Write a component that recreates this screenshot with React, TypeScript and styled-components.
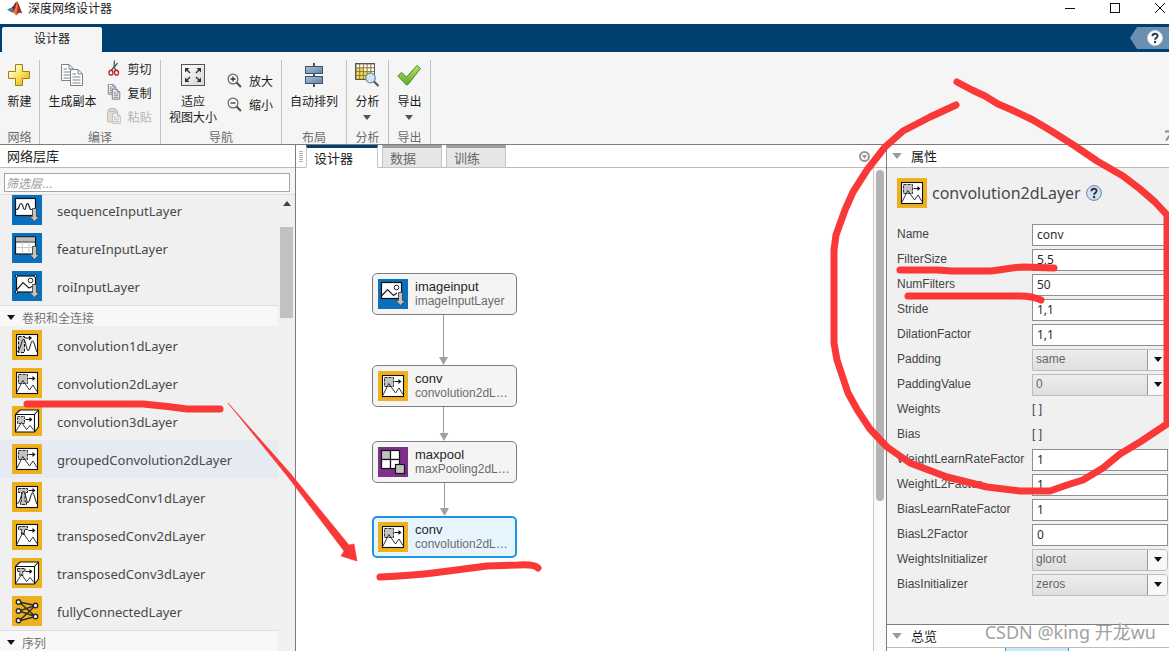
import React from "react";
import styled, { createGlobalStyle, css } from "styled-components";

const UI = `"Noto Sans", "Noto Sans CJK SC", sans-serif`;
const CJK = `"Noto Sans CJK SC", "Noto Sans", sans-serif`;
const ARIAL = `"Liberation Sans", "Noto Sans CJK SC", sans-serif`;

const GlobalStyle = createGlobalStyle`
  * { box-sizing: border-box; }
  body { margin: 0; background: #fff; font-family: ${CJK}; font-size: 12px; color: #1c1c1c; }
  button, input, select { font: inherit; color: inherit; margin: 0; }
  h1, h2, h3, p, ul { margin: 0; padding: 0; font-weight: 400; font-size: inherit; }
  ul { list-style: none; }
  svg { display: block; flex: none; }
`;

/* ---------- window frame ---------- */

const Window = styled.div`
  position: relative;
  display: flex;
  flex-direction: column;
  height: 100vh;
  overflow: hidden;
`;

const TitleBar = styled.header`
  display: flex;
  align-items: center;
  gap: 5px;
  height: 24px;
  padding: 0 0 8px 7px;
  flex: none;
`;

const WindowTitle = styled.h1`
  flex: 1;
  font-size: 12px;
  line-height: 16px;
`;

const WindowButton = styled.button`
  width: 18px;
  height: 16px;
  margin-left: 22px;
  padding: 0;
  border: 0;
  background: none;
  display: grid;
  place-items: center;
`;

const TabStrip = styled.nav`
  display: flex;
  justify-content: space-between;
  align-items: flex-end;
  height: 28px;
  padding-left: 2px;
  background: #004070;
  flex: none;
`;

const RibbonTab = styled.button`
  display: grid;
  justify-content: center;
  align-content: start;
  width: 100px;
  height: 25px;
  padding: 0;
  border: 0;
  border-radius: 2px 2px 0 0;
  background: #f5f5f5;
  font-size: 12px;
  line-height: 22px;
`;

const HelpTab = styled.button`
  width: 39px;
  height: 22px;
  margin-bottom: 3px;
  padding: 0 0 0 10px;
  border: 0;
  background: #6a8fb0;
  clip-path: polygon(0 50%, 7px 0, 100% 0, 100% 100%, 7px 100%);
  display: grid;
  place-items: center;
`;

/* ---------- ribbon ---------- */

const Ribbon = styled.section`
  display: flex;
  height: 93px;
  padding-top: 8px;
  background: #f5f5f5;
  border-bottom: 1px solid #7c7c7c;
  flex: none;
`;

const RibbonGroup = styled.div<{ $width: number }>`
  display: flex;
  flex-direction: column;
  justify-content: space-between;
  width: ${(p) => p.$width}px;
  border-right: 1px solid #c2c2c2;
`;

const GroupBody = styled.div`
  display: flex;
  justify-content: center;
  gap: 10px;
`;

const GroupLabel = styled.div`
  height: 14px;
  line-height: 14px;
  text-align: center;
  color: #6b6b6b;
`;

const BigButton = styled.button`
  display: flex;
  flex-direction: column;
  align-items: center;
  padding: 3px 0 0;
  border: 0;
  background: none;
  line-height: 16px;
  white-space: nowrap;
`;

const BigLabel = styled.span`
  margin-top: 6px;
`;

const SmallStack = styled.div<{ $top: number }>`
  display: flex;
  flex-direction: column;
  margin-top: ${(p) => p.$top}px;
`;

const SmallButton = styled.button`
  display: flex;
  align-items: center;
  gap: 7px;
  height: 24px;
  padding: 0;
  border: 0;
  background: none;
  white-space: nowrap;
  &:disabled { color: #b4b4b4; }
`;

const Collapse = styled.button`
  display: grid;
  align-self: flex-end;
  width: 4px;
  height: 14px;
  margin-left: auto;
  padding: 0;
  border: 0;
  background: none;
  overflow: hidden;
`;

/* ---------- work area ---------- */

const WorkArea = styled.main`
  display: flex;
  flex: 1;
  min-height: 0;
`;

const PanelHeader = styled.h2<{ $pad: number }>`
  display: flex;
  align-items: center;
  gap: 9px;
  height: 23px;
  padding-left: ${(p) => p.$pad}px;
  border-bottom: 1px solid #bdbdbd;
  background: #fff;
  font-size: 13px;
  line-height: 22px;
  flex: none;
`;

const Library = styled.aside`
  display: flex;
  flex-direction: column;
  width: 296px;
  border-right: 1px solid #7c7c7c;
  background: #f0f0f0;
  flex: none;
`;

const FilterBar = styled.div`
  height: 27px;
  padding: 5px 5px 3px 4px;
  border-bottom: 1px solid #e0e0e0;
  background: #f5f5f5;
  flex: none;
`;

const FilterInput = styled.input`
  display: block;
  width: 100%;
  height: 19px;
  padding: 0 1px;
  border: 1px solid #a5a5a5;
  background: #fff;
  font-size: 12px;
  &::placeholder { color: #9b9b9b; font-style: italic; opacity: 1; }
`;

const LibraryScroll = styled.div`
  display: flex;
  flex: 1;
  min-height: 0;
  overflow: hidden;
`;

const LibraryList = styled.div`
  flex: 1;
  margin-top: -4px;
`;

const LayerRow = styled.li<{ $hot?: boolean }>`
  display: flex;
  align-items: center;
  gap: 15px;
  height: 38px;
  padding-left: 12px;
  background: ${(p) => (p.$hot ? "#e6eaf3" : "transparent")};
  color: #484848;
  font-family: ${UI};
  font-size: 13px;
`;

const LayerName = styled.span`
  padding-top: 2px;
`;

const SectionHead = styled.h3`
  display: flex;
  align-items: center;
  gap: 7px;
  height: 21px;
  padding: 2px 0 0 7px;
  border-top: 1px solid #dedede;
  background: #f8f8f8;
  color: #757575;
  font-size: 12px;
`;

const LibraryScrollbar = styled.div`
  display: flex;
  flex-direction: column;
  align-items: center;
  gap: 21px;
  width: 13px;
  margin: 0 2px;
  padding-top: 6px;
`;

const LibraryThumb = styled.div`
  width: 13px;
  height: 91px;
  background: #c1c1c1;
`;

const Center = styled.section`
  display: flex;
  flex-direction: column;
  flex: 1;
  min-width: 0;
`;

const DocTabs = styled.div`
  display: flex;
  height: 23px;
  padding-left: 3px;
  border-bottom: 1px solid #bdbdbd;
  flex: none;
`;

const Grip = styled.div`
  width: 4px;
  height: 11px;
  margin: 6px 3px 0 0;
  background: repeating-linear-gradient(#b0b0b0 0 1px, #fff 1px 2px);
`;

const DocTab = styled.button<{ $active?: boolean }>`
  width: ${(p) => (p.$active ? 72 : 60)}px;
  height: 23px;
  margin-right: 4px;
  padding: 0 0 0 7px;
  border: 1px solid #c4c4c4;
  border-top: 3px solid #9c9c9c;
  background: #e6e6e6;
  color: #666;
  font-size: 13px;
  line-height: 20px;
  text-align: left;
  ${(p) => p.$active && css`
    border-top-color: #004070;
    border-bottom-color: #fff;
    background: #fff;
    color: #1c1c1c;
  `}
`;

const TabMenu = styled.button`
  margin: 6px 16px 0 auto;
  height: 11px;
  padding: 0;
  border: 0;
  background: none;
`;

const CanvasArea = styled.div`
  display: flex;
  flex: 1;
  min-height: 0;
`;

const Canvas = styled.div`
  position: relative;
  flex: 1;
  overflow: hidden;
`;

const Edges = styled.svg`
  position: absolute;
  left: 0;
  top: 0;
`;

const CanvasScrollbar = styled.div`
  width: 13px;
  padding: 2px 2px 0;
  border-left: 1px solid #c8c8c8;
  background: #fafafa;
`;

const CanvasThumb = styled.div`
  width: 8px;
  height: 331px;
  border-radius: 4px;
  background: #b3b3b3;
`;

const Node = styled.div<{ $y: number; $selected?: boolean }>`
  position: absolute;
  left: 76px;
  top: ${(p) => p.$y}px;
  display: flex;
  align-items: center;
  gap: 7px;
  width: 145px;
  height: 42px;
  padding-left: ${(p) => (p.$selected ? 4 : 5)}px;
  border: ${(p) => (p.$selected ? "2px solid #1f97dc" : "1px solid #7d7d7d")};
  border-radius: 5px;
  background: ${(p) => (p.$selected ? "#e6f5fd" : "#f4f4f4")};
  font-family: ${ARIAL};
`;

const NodeName = styled.p`
  font-size: 13px;
  line-height: 15px;
  color: #262626;
`;

const NodeType = styled.p`
  font-size: 12px;
  line-height: 15px;
  color: #6b6b6b;
`;

/* ---------- properties ---------- */

const Properties = styled.aside`
  display: flex;
  flex-direction: column;
  width: 283px;
  border-left: 1px solid #7c7c7c;
  background: #f0f0f0;
  flex: none;
`;

const PropBody = styled.div`
  flex: none;
  padding: 10px 1px 27px 10px;
  border-bottom: 1px solid #7c7c7c;
`;

const PropTitle = styled.div`
  display: flex;
  align-items: center;
  gap: 5px;
  margin-bottom: 14px;
  font-family: ${UI};
  font-size: 16px;
  line-height: 30px;
  color: #484848;
`;

const PlainButton = styled.button`
  padding: 0;
  border: 0;
  background: none;
`;

const PropRow = styled.div`
  display: grid;
  grid-template-columns: 135px 1fr;
  align-items: center;
  height: 25px;
  font-family: ${ARIAL};
  color: #444;
`;

const PropLabel = styled.label`
  padding-bottom: 2px;
`;

const PropInput = styled.input`
  width: 100%;
  height: 22px;
  padding: 0 4px;
  border: 1px solid #8f8f8f;
  background: #fff;
  color: #2c2c2c;
  font-family: ${UI};
  font-size: 12px;
`;

const PropOutput = styled.output`
  padding-bottom: 2px;
`;

const SelectBox = styled.div`
  position: relative;
`;

const PropSelect = styled.select`
  display: block;
  appearance: none;
  width: 100%;
  height: 22px;
  padding: 0 20px 2px 3px;
  border: 1px solid #bcbcbc;
  border-radius: 0 4px 4px 0;
  background: linear-gradient(#ededed, #dfdfdf);
  color: #666;
`;

const SelectArrow = styled.span`
  position: absolute;
  top: 1px;
  right: 1px;
  display: grid;
  place-items: center;
  width: 20px;
  height: 20px;
  border-left: 1px solid #9a9a9a;
  border-radius: 0 3px 3px 0;
  background: #f8f8f8;
  pointer-events: none;
`;

const Overview = styled.div`
  flex: 1;
  background: #fff;
  overflow: hidden;
`;

const OverviewView = styled.div`
  width: 64px;
  height: 100px;
  margin-left: 118px;
  border: solid #1f97dc;
  border-width: 0 1px;
  background: #c9e9fb;
`;

/* ---------- overlays ---------- */

const Ink = styled.svg<{ $side: "left" | "right" }>`
  position: absolute;
  top: 0;
  ${(p) => p.$side}: 0;
  pointer-events: none;
`;

const Watermark = styled.p`
  position: absolute;
  right: 13px;
  bottom: 6px;
  font-family: ${UI};
  font-size: 18px;
  line-height: 26px;
  color: #a2a2a2;
  text-shadow: 1px 1px 0 #fff;
  pointer-events: none;
`;

/* ---------- drawings ---------- */

const Caret = ({ color = "#111", w = 8 }: { color?: string; w?: number }) => (
  <svg width={w} height={w / 2 + 1} viewBox="0 0 8 5">
    <path d="M0 0h8L4 5z" fill={color} />
  </svg>
);

const HelpIcon = ({ dark }: { dark?: boolean }) => (
  <svg width="16" height="16" viewBox="0 0 16 16">
    <circle cx="8" cy="8" r="7.4" fill={dark ? "#d3e2ee" : "#fff"} stroke={dark ? "#6d8296" : "#d4e0ea"} />
    <path d="M5.4 6.3C5.5 3 10.6 3.1 10.6 5.9C10.6 7.8 8.1 7.8 8.1 9.800" fill="none" stroke="#22384d" strokeWidth="1.900" />
    <circle cx="8.100" cy="12" r="1.200" fill="#22384d" />
  </svg>
);

const MatlabIcon = () => (
  <svg width="16" height="15" viewBox="0 0 16 15">
    <path d="M0 8.500 4.500 6.500 7 8.500 4.500 11.500z" fill="#3c7fb5" />
    <path d="M4.500 6.500C7 5.500 8 1 10 .500L8 8 6 10.500 4.500 11.500 6.500 8.500z" fill="#6b2a2a" />
    <path d="M10 .500C12 2 13.500 9 15.500 12.500 13 11 11.500 11.500 9 14.500 8 12 7 11 5 11.500 8 9 8.500 3 10 .500z" fill="#a3301c" />
    <path d="M10 .500C11 3 11 9 9 14.500 8.500 12 7.500 11 6 11 9 8 9 3 10 .500z" fill="#ef7a3a" />
  </svg>
);

const Arrow = ({ x, y }: { x: number; y: number }) => (
  <g transform={`translate(${x} ${y})`} stroke="#111" fill="#111">
    <path d="M0 0H6" strokeWidth="1" fill="none" />
    <path d="M4-2.500 7 0 4 2.500z" stroke="none" />
  </g>
);

const Down = () => (
  <path d="M20.500 13.500h4v8h2.700L22.500 26.500 17.800 21.500h2.700z" fill="#c2c2c2" stroke="#444" strokeWidth=".9" />
);

type Kind =
  | "sequence" | "feature" | "roi" | "image"
  | "conv1" | "conv2" | "conv3" | "t1" | "t2" | "t3" | "fc" | "pool";

const frame = <rect x="4.500" y="4.500" width="21" height="21" fill="#fff" stroke="#111" strokeWidth="1.100" />;
const hills = <path d="M5 24 10.800 12.500 17.500 22 21 17 25 23.500" fill="none" stroke="#333" strokeWidth="1" />;
const cube = (
  <g fill="#fff" stroke="#111" strokeWidth="1.100" strokeLinejoin="round">
    <path d="M3.500 8.500 8 4h18.500v17L22.500 26H3.500z" />
    <path d="M3.500 8.500H22.500V26M22.500 8.500 26.500 4" fill="none" />
  </g>
);
const smallHills = <path d="M4 25 9.500 16.500 14.500 23.500 18 19.500 22 24.500" fill="none" stroke="#333" strokeWidth="1" />;
const wave = <path d="M5 21.500C9 21.500 9 9.500 11.500 9.500S14 20.500 16 20.500 18.500 11 20.500 11 22.500 17 25 22" fill="none" stroke="#333" strokeWidth="1.100" />;

const glyphs: Record<Kind, React.ReactNode> = {
  sequence: (
    <>
      <rect x="3.500" y="3.500" width="20" height="17" fill="#fff" stroke="#111" strokeWidth="1.200" />
      <path d="M4 14.500C8 15 6.500 8.500 9 8.500S10.500 14.500 12.500 14.500 13.500 8.500 15.500 8.500 17 14.500 19 14.500H20" fill="none" stroke="#222" strokeWidth="1.200" />
      <Down />
    </>
  ),
  feature: (
    <>
      <rect x="3.500" y="4" width="20" height="17" fill="#fff" stroke="#111" strokeWidth="1.200" />
      <rect x="4" y="4.500" width="19" height="4" fill="#bdbdbd" />
      <path d="M3.500 9H23.500" stroke="#222" />
      <path d="M4 14.500H23M10.500 9V20.500M17 9V20.500" stroke="#ccc" />
      <Down />
    </>
  ),
  roi: (
    <>
      <rect x="4.500" y="5" width="19" height="16" fill="#fff" stroke="#111" strokeWidth="1.200" />
      <path d="M5 18.500 11 11.500 17 17 20 15.500" fill="none" stroke="#222" strokeWidth="1.200" />
      <circle cx="18.500" cy="9.500" r="2.300" fill="#fff" stroke="#222" />
      <g fill="#fff" stroke="#111"><circle cx="4.500" cy="5" r="1.300" /><circle cx="23.500" cy="5" r="1.300" /><circle cx="4.500" cy="21" r="1.300" /></g>
      <Down />
    </>
  ),
  image: (
    <>
      <rect x="3.500" y="3.500" width="20" height="16" fill="#fff" stroke="#111" strokeWidth="1.200" />
      <path d="M4 16.500 9.500 10.500 15.500 16.500 19 14" fill="none" stroke="#222" strokeWidth="1.200" />
      <circle cx="18.500" cy="8.500" r="2.300" fill="#fff" stroke="#222" />
      <Down />
    </>
  ),
  conv1: (
    <>
      {frame}
      <rect x="6.500" y="6.500" width="6" height="16" fill="#c2c2c2" stroke="#111" strokeDasharray="3 1.500" />
      {wave}
      <Arrow x={13} y={8} />
    </>
  ),
  conv2: (
    <>
      {frame}
      <rect x="6.500" y="6.500" width="9" height="9" fill="#c2c2c2" stroke="#333" strokeDasharray="3 1" />
      {hills}
      <Arrow x={16.500} y={10.500} />
    </>
  ),
  conv3: (
    <>
      {cube}
      <rect x="5.500" y="10.500" width="7" height="7" fill="#c2c2c2" stroke="#333" strokeDasharray="2.500 1" />
      {smallHills}
      <Arrow x={13.500} y={13.500} />
    </>
  ),
  t1: (
    <>
      {frame}
      <path d="M6.500 6.500h9v4h-2.500v9h1.500v3h-6v-3h1v-9h-3z" fill="#c2c2c2" stroke="#222" strokeDasharray="3 .8" />
      {wave}
      <Arrow x={16.500} y={8.500} />
    </>
  ),
  t2: (
    <>
      {frame}
      <path d="M6.500 6.500h9v3h-3v5h-3v-5h-3z" fill="#c2c2c2" stroke="#222" strokeDasharray="3 .8" />
      {hills}
      <Arrow x={16.500} y={10.500} />
    </>
  ),
  t3: (
    <>
      {cube}
      <path d="M5.500 10.500h7.500v3h-2.200v4h-3v-4H5.500z" fill="#c2c2c2" stroke="#222" strokeDasharray="3 .8" />
      {smallHills}
      <Arrow x={13.500} y={13.500} />
    </>
  ),
  fc: (
    <g stroke="#2a2a2a" strokeWidth="1.400">
      <path d="M7 6 23.500 9.500 7 15 23.500 20.500 7 25 23.500 9.500M7 6 23.500 20.500" fill="none" />
      <g fill="#fff">
        <circle cx="6.500" cy="6" r="2.200" /><circle cx="6.500" cy="15" r="2.200" /><circle cx="6.500" cy="24.500" r="2.200" />
        <circle cx="23.500" cy="9.500" r="2.200" /><circle cx="23.500" cy="20.500" r="2.200" />
      </g>
    </g>
  ),
  pool: (
    <g fill="#fff" stroke="#111" strokeWidth="1.200">
      <rect x="3.500" y="3.500" width="9" height="9" fill="#c2c2c2" /><rect x="12.500" y="3.500" width="9" height="9" />
      <rect x="3.500" y="12.500" width="9" height="9" /><rect x="12.500" y="12.500" width="9" height="9" />
      <rect x="17.500" y="17.500" width="9" height="9" fill="#c2c2c2" />
    </g>
  ),
};

const tint = (k: Kind) =>
  k === "pool" ? "#7e2f8e" : ["sequence", "feature", "roi", "image"].includes(k) ? "#0a70bd" : "#edb120";

const LayerIcon = ({ kind }: { kind: Kind }) => (
  <svg width="30" height="30" viewBox="0 0 30 30">
    <rect width="30" height="30" fill={tint(kind)} />
    {glyphs[kind]}
  </svg>
);

const PlusIcon = () => (
  <svg width="24" height="24" viewBox="0 0 24 24">
    <defs>
      <linearGradient id="gold" x1="0" y1="0" x2="1" y2="1">
        <stop offset=".2" stopColor="#fffbd0" /><stop offset=".6" stopColor="#f7d944" /><stop offset="1" stopColor="#d9a514" />
      </linearGradient>
    </defs>
    <path d="M8.500 1.500h7v7h7v7h-7v7h-7v-7h-7v-7h7z" fill="url(#gold)" stroke="#a97a10" />
  </svg>
);

const Page = ({ x, y, s, faded }: { x: number; y: number; s: number; faded?: boolean }) => (
  <g transform={`translate(${x} ${y}) scale(${s})`} stroke={faded ? "#bbb" : "#77828c"} strokeWidth={1 / s}>
    <path d="M.5.5H8L12.500 5V16.500H.5z" fill="#fff" />
    <path d="M8 .5V5h4.500M2.500 5H6M2.500 8h8M2.500 11h8M2.500 14h8" fill="none" />
  </g>
);

const DuplicateIcon = () => (
  <svg width="24" height="24" viewBox="0 0 24 24"><Page x={1} y={1} s={1} /><Page x={10} y={6} s={1} /></svg>
);

const CopyIcon = () => (
  <svg width="14" height="16" viewBox="0 0 14 16"><Page x={1} y={0} s={0.62} /><Page x={5} y={5} s={0.62} /></svg>
);

const PasteIcon = () => (
  <svg width="14" height="16" viewBox="0 0 14 16">
    <rect x=".5" y="2" width="10" height="12" rx="1" fill="#e3dbd2" stroke="#c5bcb2" />
    <rect x="3" y=".5" width="5" height="3" fill="#ddd" stroke="#bbb" />
    <Page x={5.5} y={5} s={0.62} faded />
  </svg>
);

const CutIcon = () => (
  <svg width="14" height="16" viewBox="0 0 14 16" fill="none">
    <path d="M7.500.5 7 7 4 11M10.500 3 7 7.500 9.500 11" stroke="#555" strokeWidth="1.300" />
    <ellipse cx="4" cy="12.700" rx="2" ry="2.400" stroke="#bd2a33" strokeWidth="1.400" />
    <ellipse cx="9.500" cy="12.700" rx="2" ry="2.400" stroke="#bd2a33" strokeWidth="1.400" />
  </svg>
);

const FitIcon = () => (
  <svg width="24" height="24" viewBox="0 0 24 24">
    <defs>
      <linearGradient id="fit" x1="0" y1="0" x2="1" y2="1"><stop stopColor="#fff" /><stop offset="1" stopColor="#d5d5d5" /></linearGradient>
    </defs>
    <rect x=".5" y="1.500" width="23" height="21" fill="url(#fit)" stroke="#555" />
    <path d="M4 5h4.500L4 9.500zM20 5h-4.500l4.500 4.500zM4 19h4.500L4 14.500zM20 19h-4.500l4.500-4.500z" fill="#333" />
    <path d="M5 6l4 4M19 6l-4 4M5 18l4-4M19 18l-4-4" stroke="#333" strokeWidth="1.400" />
  </svg>
);

const ZoomIcon = ({ plus }: { plus?: boolean }) => (
  <svg width="15" height="15" viewBox="0 0 15 15" fill="none">
    <circle cx="6" cy="6" r="4.900" fill="#fbfbfb" stroke="#666" strokeWidth="1.200" />
    <path d="M9.500 9.500 14 14" stroke="#555" strokeWidth="2.200" />
    <path d={plus ? "M3.500 6h5M6 3.500v5" : "M3.500 6h5"} stroke="#333" strokeWidth="1.300" />
  </svg>
);

const ArrangeIcon = () => (
  <svg width="24" height="24" viewBox="0 0 24 24">
    <defs>
      <linearGradient id="steel" x1="0" y1="0" x2="1" y2="1"><stop stopColor="#a9c2d8" /><stop offset="1" stopColor="#5f83a5" /></linearGradient>
    </defs>
    <path d="M12 0v24" stroke="#111" strokeWidth="1.400" />
    <rect x="3.500" y="3.500" width="17" height="7" fill="url(#steel)" stroke="#3c566e" />
    <rect x="3.500" y="13.500" width="17" height="7" fill="url(#steel)" stroke="#3c566e" />
  </svg>
);

const AnalyzeIcon = () => (
  <svg width="24" height="24" viewBox="0 0 24 24">
    <rect x=".5" y=".5" width="19" height="16" fill="#8a7638" stroke="#555" />
    {[0, 1, 2, 3].map((r) =>
      [0, 1, 2, 3, 4].map((c) => (
        <rect key={`${r}-${c}`} x={1.5 + c * 3.7} y={1.5 + r * 3.8} width="2.700" height="2.800" fill={r === 0 || (c > 1 && r < 2) || c === 4 ? "#fff" : "#f5dc50"} />
      )),
    )}
    <circle cx="15.500" cy="15" r="4.800" fill="#cfe4f6" stroke="#7790a6" strokeWidth="1.300" />
    <path d="M19 18.500 23.500 23" stroke="#5a5a5a" strokeWidth="2.200" />
  </svg>
);

const CheckIcon = () => (
  <svg width="24" height="24" viewBox="0 0 24 24">
    <defs>
      <linearGradient id="leaf" x1="0" y1="0" x2="0" y2="1"><stop stopColor="#b9e26a" /><stop offset="1" stopColor="#5cab2c" /></linearGradient>
    </defs>
    <path d="M.800 13 4.500 9.500 9.500 14 20 2.500 23.500 5.500 11 21.500 9.500 22z" fill="url(#leaf)" stroke="#4b8a24" />
  </svg>
);

/* ---------- data ---------- */

type Layer = { kind: Kind; name: string; hot?: boolean };

const inputLayers: Layer[] = [
  { kind: "sequence", name: "sequenceInputLayer" },
  { kind: "feature", name: "featureInputLayer" },
  { kind: "roi", name: "roiInputLayer" },
];

const convLayers: Layer[] = [
  { kind: "conv1", name: "convolution1dLayer" },
  { kind: "conv2", name: "convolution2dLayer" },
  { kind: "conv3", name: "convolution3dLayer" },
  { kind: "conv2", name: "groupedConvolution2dLayer", hot: true },
  { kind: "t1", name: "transposedConv1dLayer" },
  { kind: "t2", name: "transposedConv2dLayer" },
  { kind: "t3", name: "transposedConv3dLayer" },
  { kind: "fc", name: "fullyConnectedLayer" },
];

const nodes: { kind: Kind; name: string; type: string; y: number; selected?: boolean }[] = [
  { kind: "image", name: "imageinput", type: "imageInputLayer", y: 105 },
  { kind: "conv2", name: "conv", type: "convolution2dL…", y: 197 },
  { kind: "pool", name: "maxpool", type: "maxPooling2dL…", y: 273 },
  { kind: "conv2", name: "conv", type: "convolution2dL…", y: 348, selected: true },
];

const properties: { name: string; value: string; as: "input" | "select" | "text" }[] = [
  { name: "Name", value: "conv", as: "input" },
  { name: "FilterSize", value: "5,5", as: "input" },
  { name: "NumFilters", value: "50", as: "input" },
  { name: "Stride", value: "1,1", as: "input" },
  { name: "DilationFactor", value: "1,1", as: "input" },
  { name: "Padding", value: "same", as: "select" },
  { name: "PaddingValue", value: "0", as: "select" },
  { name: "Weights", value: "[ ]", as: "text" },
  { name: "Bias", value: "[ ]", as: "text" },
  { name: "WeightLearnRateFactor", value: "1", as: "input" },
  { name: "WeightL2Factor", value: "1", as: "input" },
  { name: "BiasLearnRateFactor", value: "1", as: "input" },
  { name: "BiasL2Factor", value: "0", as: "input" },
  { name: "WeightsInitializer", value: "glorot", as: "select" },
  { name: "BiasInitializer", value: "zeros", as: "select" },
];

const LayerList = ({ items }: { items: Layer[] }) => (
  <ul>
    {items.map((l) => (
      <LayerRow key={l.name} $hot={l.hot}>
        <LayerIcon kind={l.kind} />
        <LayerName>{l.name}</LayerName>
      </LayerRow>
    ))}
  </ul>
);

const Field = ({ name, value, as }: (typeof properties)[number]) => (
  <PropRow>
    <PropLabel htmlFor={name}>{name}</PropLabel>
    {as === "input" && <PropInput id={name} defaultValue={value} />}
    {as === "text" && <PropOutput id={name}>{value}</PropOutput>}
    {as === "select" && (
      <SelectBox>
        <PropSelect id={name} defaultValue={value}>
          <option>{value}</option>
        </PropSelect>
        <SelectArrow><Caret /></SelectArrow>
      </SelectBox>
    )}
  </PropRow>
);

const RED = "#fa3838";

export default function App() {
  return (
    <Window>
      <GlobalStyle />
      <TitleBar>
        <MatlabIcon />
        <WindowTitle>深度网络设计器</WindowTitle>
        <WindowButton aria-label="最小化">
          <svg width="10" height="10" viewBox="0 0 10 10"><path d="M0 5.500h10" stroke="#111" /></svg>
        </WindowButton>
        <WindowButton aria-label="最大化">
          <svg width="10" height="10" viewBox="0 0 10 10"><rect x=".5" y=".5" width="9" height="9" fill="none" stroke="#111" /></svg>
        </WindowButton>
        <WindowButton aria-label="关闭">
          <svg width="10" height="10" viewBox="0 0 10 10"><path d="M0 0l10 10M10 0L0 10" stroke="#111" /></svg>
        </WindowButton>
      </TitleBar>

      <TabStrip>
        <RibbonTab>设计器</RibbonTab>
        <HelpTab aria-label="帮助"><HelpIcon /></HelpTab>
      </TabStrip>

      <Ribbon>
        <RibbonGroup $width={40}>
          <GroupBody>
            <BigButton><PlusIcon /><BigLabel>新建</BigLabel></BigButton>
          </GroupBody>
          <GroupLabel>网络</GroupLabel>
        </RibbonGroup>
        <RibbonGroup $width={121}>
          <GroupBody>
            <BigButton><DuplicateIcon /><BigLabel>生成副本</BigLabel></BigButton>
            <SmallStack $top={-4}>
              <SmallButton><CutIcon />剪切</SmallButton>
              <SmallButton><CopyIcon />复制</SmallButton>
              <SmallButton disabled><PasteIcon />粘贴</SmallButton>
            </SmallStack>
          </GroupBody>
          <GroupLabel>编译</GroupLabel>
        </RibbonGroup>
        <RibbonGroup $width={121}>
          <GroupBody>
            <BigButton><FitIcon /><BigLabel>适应<br />视图大小</BigLabel></BigButton>
            <SmallStack $top={8}>
              <SmallButton><ZoomIcon plus />放大</SmallButton>
              <SmallButton><ZoomIcon />缩小</SmallButton>
            </SmallStack>
          </GroupBody>
          <GroupLabel>导航</GroupLabel>
        </RibbonGroup>
        <RibbonGroup $width={65}>
          <GroupBody>
            <BigButton><ArrangeIcon /><BigLabel>自动排列</BigLabel></BigButton>
          </GroupBody>
          <GroupLabel>布局</GroupLabel>
        </RibbonGroup>
        <RibbonGroup $width={42}>
          <GroupBody>
            <BigButton><AnalyzeIcon /><BigLabel>分析</BigLabel><BigLabel><Caret color="#555" /></BigLabel></BigButton>
          </GroupBody>
          <GroupLabel>分析</GroupLabel>
        </RibbonGroup>
        <RibbonGroup $width={42}>
          <GroupBody>
            <BigButton><CheckIcon /><BigLabel>导出</BigLabel><BigLabel><Caret color="#555" /></BigLabel></BigButton>
          </GroupBody>
          <GroupLabel>导出</GroupLabel>
        </RibbonGroup>
        <Collapse aria-label="折叠工具条">
          <svg width="10" height="12" viewBox="0 0 10 12" fill="none"><path d="M0 1.500h9M1 10.500 5 5l4 5.500" stroke="#8a8a8a" strokeWidth="2" /></svg>
        </Collapse>
      </Ribbon>

      <WorkArea>
        <Library>
          <PanelHeader $pad={7}>网络层库</PanelHeader>
          <FilterBar><FilterInput aria-label="筛选层" placeholder="筛选层..." /></FilterBar>
          <LibraryScroll>
            <LibraryList>
              <LayerList items={inputLayers} />
              <SectionHead><Caret />卷积和全连接</SectionHead>
              <LayerList items={convLayers} />
              <SectionHead><Caret />序列</SectionHead>
            </LibraryList>
            <LibraryScrollbar>
              <svg width="8" height="5" viewBox="0 0 8 5"><path d="M0 5h8L4 0z" fill="#444" /></svg>
              <LibraryThumb />
            </LibraryScrollbar>
          </LibraryScroll>
        </Library>

        <Center>
          <DocTabs>
            <Grip />
            <DocTab $active>设计器</DocTab>
            <DocTab>数据</DocTab>
            <DocTab>训练</DocTab>
            <TabMenu aria-label="文档操作">
              <svg width="11" height="11" viewBox="0 0 11 11"><circle cx="5.500" cy="5.500" r="4.500" fill="#fff" stroke="#999" strokeWidth="2" /><path d="M3 4h5L5.500 8z" fill="#999" /></svg>
            </TabMenu>
          </DocTabs>
          <CanvasArea>
            <Canvas>
              <Edges width="300" height="400" viewBox="0 0 300 400">
                <path d="M147.500 147V190M147.500 239V266M148.500 315V341" stroke="#999" />
                <path d="M143 189h9l-4.500 8zM143.500 265h9l-4.500 8zM144 340h9l-4.500 8z" fill="#a0a0a0" />
              </Edges>
              {nodes.map((n) => (
                <Node key={n.y} $y={n.y} $selected={n.selected}>
                  <LayerIcon kind={n.kind} />
                  <div>
                    <NodeName>{n.name}</NodeName>
                    <NodeType>{n.type}</NodeType>
                  </div>
                </Node>
              ))}
            </Canvas>
            <CanvasScrollbar><CanvasThumb /></CanvasScrollbar>
          </CanvasArea>
        </Center>

        <Properties>
          <PanelHeader $pad={5}><Caret color="#999" w={10} />属性</PanelHeader>
          <PropBody>
            <PropTitle>
              <LayerIcon kind="conv2" />
              convolution2dLayer
              <PlainButton aria-label="帮助"><HelpIcon dark /></PlainButton>
            </PropTitle>
            {properties.map((p) => <Field key={p.name} {...p} />)}
          </PropBody>
          <PanelHeader $pad={5}><Caret color="#999" w={10} />总览</PanelHeader>
          <Overview><OverviewView /></Overview>
        </Properties>
      </WorkArea>

      <Watermark>CSDN @king 开龙wu</Watermark>

      <Ink $side="left" width="560" height="600" viewBox="0 0 560 600" fill="none">
        <path d="M27 404H143Q165 406 187 409H220" stroke={RED} strokeWidth="7" strokeLinecap="round" strokeLinejoin="round" />
        <path d="M228 403 290 473 349 545 354 544 357 561 341 556 344 551 288 477z" fill={RED} stroke={RED} strokeWidth=".6" strokeLinejoin="round" />
        <path d="M380 577C400 576 415 575 433 573L487 566 518 565Q534 564 538 568" stroke={RED} strokeWidth="7" strokeLinecap="round" strokeLinejoin="round" />
      </Ink>
      <Ink $side="right" width="349" height="500" viewBox="820 0 349 500" fill="none" stroke={RED} strokeWidth="7" strokeLinecap="round" strokeLinejoin="round">
        <path d="M957 82 972 90 985 96 998 104 1012 110 1033 120 1053 132 1075 146 1097 161 1123 176 1140 189 1155 202 1167 215V424L1140 442 1120 454 1103 468 1083 480 1067 485 1050 491H1020L987 487 947 477 910 463 887 447 870 429 858 411 848 393 837 360 834 343V250L836 235 845 210 853 192 867 170 885 147 903 131 930 117 956 105" />
        <path d="M900 270H937L952 271H990C1003 270 1012 267 1024 267L1054 268" />
        <path d="M908 296H1020Q1032 296 1041 300" />
      </Ink>
    </Window>
  );
}
